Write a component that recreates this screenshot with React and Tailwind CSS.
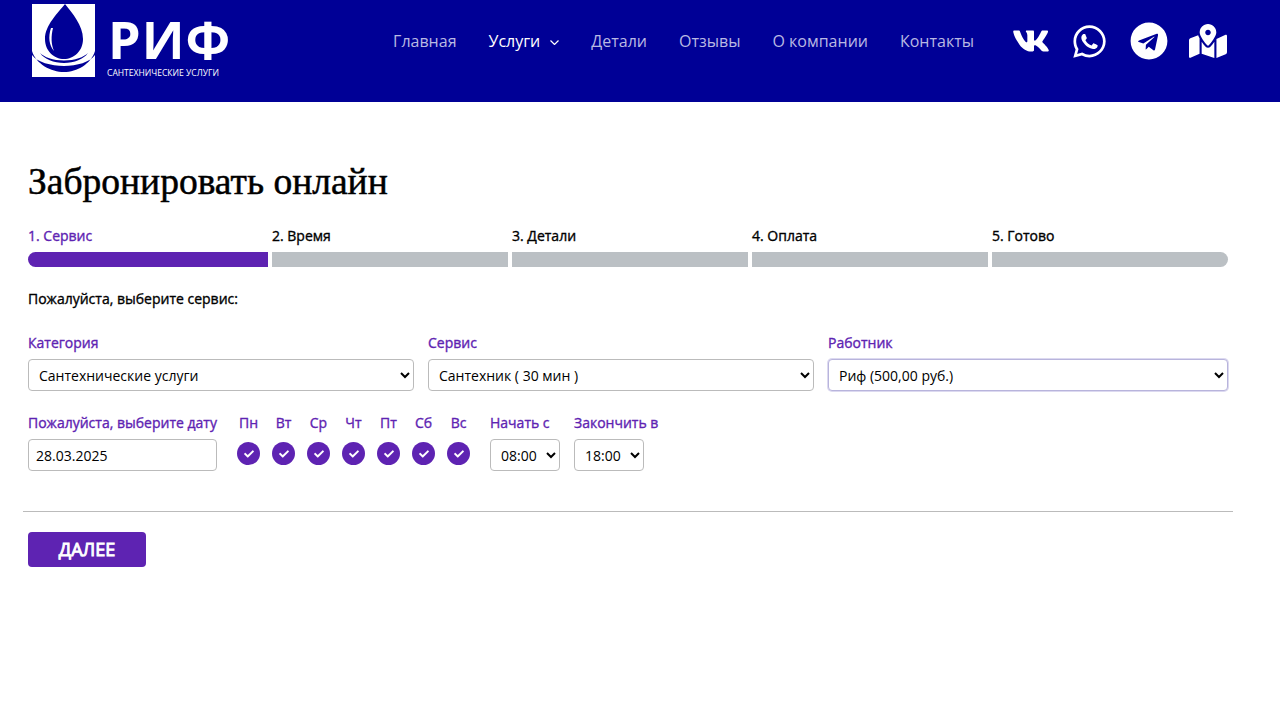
import { FaVk, FaWhatsapp, FaTelegram, FaMapMarkedAlt, FaCheck } from 'react-icons/fa'

const navItems = ['Главная', 'Услуги', 'Детали', 'Отзывы', 'О компании', 'Контакты']
const steps = ['1. Сервис', '2. Время', '3. Детали', '4. Оплата', '5. Готово']
const days = ['Пн', 'Вт', 'Ср', 'Чт', 'Пт', 'Сб', 'Вс']

const labelClass = "text-sm leading-[19px] text-[#5e23b2] [-webkit-text-stroke:0.35px_currentColor] whitespace-nowrap"

function Logo() {
  return (
    <div className="flex items-start">
      <svg width="63" height="73" viewBox="0 0 63 73" className="mt-1">
        <rect width="63" height="73" fill="#fff" />
        <path d="M33 0C26 9 13 21 13 35C13 47 22 55 32 55C42 55 51 47 51 35C51 21 40 9 33 0Z" fill="#000096" />
        <path d="M19 24C16 33 17 41 22 47C19 40 19 32 21 24Z" fill="#fff" />
        <path d="M8 49C12 55 22 59 32 59C42 59 52 55 56 49C52 53 43 56.500 32 56.500C21 56.500 12 53 8 49Z" fill="#000096" />
        <path d="M0 47C4 60 19 68 32 68C45 68 59 60 63 47V51C58 58 45 62 32 62C19 62 5 58 0 51Z" fill="#000096" />
      </svg>
      <div className="ml-3 flex flex-col text-white">
        <span className="pl-px text-[52px] leading-[52px] font-bold tracking-[1px] mt-[13px]">РИФ</span>
        <span className="text-[8.55px] leading-3 mt-[2px]">САНТЕХНИЧЕСКИЕ УСЛУГИ</span>
      </div>
    </div>
  )
}

function Select({ value, className }) {
  return (
    <select
      defaultValue={value}
      className={`h-8 bg-white rounded border border-[#bbbbbb] pl-[6px] text-sm text-black ${className}`}
    >
      <option>{value}</option>
    </select>
  )
}

function App() {
  return (
    <div className="min-h-screen bg-white font-['Open_Sans',sans-serif]">
      <header className="h-[102px] bg-[#000096] flex items-start pl-8 pr-[43px]">
        <Logo />
        <nav className="ml-auto mt-[30px] flex items-center gap-8 text-base leading-[22px] text-[#b9b9e3]">
          {navItems.map((item) => (
            <a key={item} className={`flex items-center ${item === 'Услуги' ? 'text-white' : ''}`}>
              {item}
              {item === 'Услуги' && (
                <svg width="9" height="5" viewBox="0 0 9 5" className="ml-[10px] mt-[3px]" fill="none" stroke="currentColor" strokeWidth="1.2">
                  <path d="M0.5 0.5L4.5 4.5L8.5 0.5" />
                </svg>
              )}
            </a>
          ))}
        </nav>
        <div className="ml-[27px] mt-[22px] flex items-center text-white">
          <div className="w-[59px] flex justify-center"><FaVk size={38} /></div>
          <div className="w-[59px] flex justify-center"><FaWhatsapp size={37} /></div>
          <div className="w-[59px] flex justify-center"><FaTelegram size={38} /></div>
          <div className="w-[59px] flex justify-center"><FaMapMarkedAlt size={38} /></div>
        </div>
      </header>

      <main className="pl-7 pt-[57px]">
        <h1 className="font-['Liberation_Serif',serif] text-[37.5px] leading-[46px] text-black [-webkit-text-stroke:0.5px_currentColor]">Забронировать онлайн</h1>

        <div className="flex w-[1200px] mt-[21px]">
          {steps.map((step, i) => (
            <div key={step} className={`w-[240px] ${i > 0 ? 'pl-1' : ''}`}>
              <div className={`${labelClass} ${i === 0 ? '' : '!text-black'}`}>{step}</div>
              <div
                className={`h-[15px] mt-[7px] ${i === 0 ? 'bg-[#5e23b2] rounded-l-lg' : 'bg-[#bbc0c4]'} ${i === 4 ? 'rounded-r-lg' : ''}`}
              />
            </div>
          ))}
        </div>

        <p className={`mt-[22px] ${labelClass} !text-black`}>Пожалуйста, выберите сервис:</p>

        <div className="flex gap-[14px] mt-[25px]">
          <div className="w-[386px]">
            <div className={`${labelClass} mb-[7px]`}>Категория</div>
            <Select value="Сантехнические услуги" className="w-full" />
          </div>
          <div className="w-[386px]">
            <div className={`${labelClass} mb-[7px]`}>Сервис</div>
            <Select value="Сантехник ( 30 мин )" className="w-full" />
          </div>
          <div className="w-[400px]">
            <div className={`${labelClass} mb-[7px]`}>Работник</div>
            <Select value="Риф (500,00 руб.)" className="w-full !border-[#b8b4dc] shadow-[0_0_0_1px_#dcd9f0]" />
          </div>
        </div>

        <div className="flex mt-[22px]">
          <div className="w-[189px]">
            <div className={`${labelClass} mb-[7px]`}>Пожалуйста, выберите дату</div>
            <input
              defaultValue="28.03.2025"
              className="w-full h-8 rounded border border-[#bbbbbb] px-[7px] text-sm text-black"
            />
          </div>
          <div className="flex ml-[14px] mr-[14px]">
            {days.map((day) => (
              <div key={day} className="w-[35px] flex flex-col items-center">
                <div className={labelClass}>{day}</div>
                <div className="mt-[10px] w-[23px] h-[23px] rounded-full bg-[#5e23b2] flex items-center justify-center text-white">
                  <FaCheck size={10} />
                </div>
              </div>
            ))}
          </div>
          <div className="w-[70px] mr-[14px]">
            <div className={`${labelClass} mb-[7px]`}>Начать с</div>
            <Select value="08:00" className="w-full" />
          </div>
          <div className="w-[70px]">
            <div className={`${labelClass} mb-[7px]`}>Закончить в</div>
            <Select value="18:00" className="w-full" />
          </div>
        </div>

        <hr className="w-[1210px] ml-[-5px] mt-[40px] border-[#bbbbbb]" />

        <button className="mt-5 w-[118px] h-[35px] pb-[2px] bg-[#5e23b2] rounded text-white text-lg [-webkit-text-stroke:0.9px_currentColor]">ДАЛЕЕ</button>
      </main>
    </div>
  )
}

export default App
